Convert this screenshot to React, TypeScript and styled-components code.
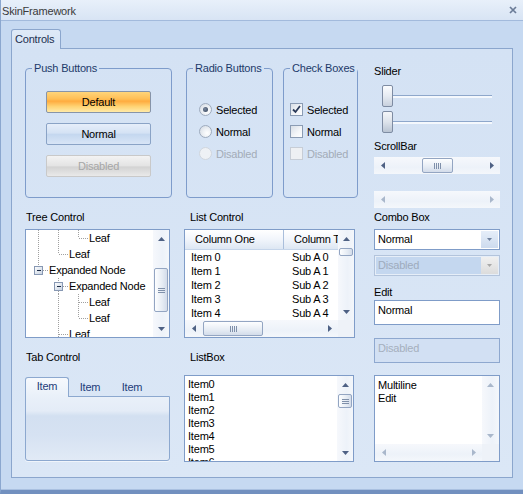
import React from "react";
import styled, { createGlobalStyle, css } from "styled-components";

const GlobalStyle = createGlobalStyle`
  html, body { margin: 0; padding: 0; background: #c6d9f1; }
  body {
    font-family: "Liberation Sans", Arial, sans-serif;
    font-size: 11px;
    letter-spacing: -0.2px;
    color: #000;
  }
  * { box-sizing: border-box; }
`;

/* ---------- window frame ---------- */
const Window = styled.div`
  width: 523px;
  height: 494px;
  display: flex;
  flex-direction: column;
  background: #c6d9f1;
  border-left: 1px solid #8ba7cf;
  border-bottom: 4px solid #7290bf;
  box-shadow: inset 0 -1px 0 #a9c0e0;
`;

const TitleBar = styled.div`
  flex: none;
  height: 21px;
  display: flex;
  align-items: center;
  justify-content: space-between;
  padding: 0 6px 0 1px;
  background: linear-gradient(#e8f0fa, #d8e4f4);
  border-bottom: 1px solid #a2badc;
`;

const TitleText = styled.span`
  color: #3a3a3a;
  line-height: 13px;
  padding-top: 3px;
`;

const Body = styled.div`
  flex: 1;
  display: flex;
  flex-direction: column;
  padding: 8px 10px 0 10px;
`;

const TabStrip = styled.div`
  display: flex;
  height: 19px;
`;

const MainTab = styled.div`
  position: relative;
  z-index: 1;
  width: 50px;
  height: 20px;
  margin-bottom: -1px;
  padding: 3px 0 0 3px;
  line-height: 13px;
  color: #1c3050;
  background: linear-gradient(#dfeaf7, #d4e2f4);
  border: 1px solid #8ba6cd;
  border-bottom: none;
  border-radius: 3px 3px 0 0;
`;

const Panel = styled.div`
  width: 502px;
  height: 430px;
  display: flex;
  align-items: flex-start;
  padding-left: 13px;
  border: 1px solid #8ba6cd;
  background: linear-gradient(#d4e2f4, #dbe7f6);
`;

const Column = styled.div<{ $width: number; $gap?: number }>`
  width: ${(p) => p.$width}px;
  margin-left: ${(p) => p.$gap ?? 0}px;
  display: flex;
  flex-direction: column;
  flex: none;
`;

/* ---------- labels ---------- */
const FieldLabel = styled.div<{ $top: number; $indent?: number }>`
  margin-top: ${(p) => p.$top}px;
  padding-left: ${(p) => p.$indent ?? 1}px;
  line-height: 13px;
  color: #000;
  white-space: nowrap;
`;

/* ---------- group boxes ---------- */
const GroupRow = styled.div`
  display: flex;
  gap: 10px;
  margin-top: 13px;
  padding-left: 2px;
`;

const GroupBox = styled.fieldset<{ $width: number; $top?: number }>`
  width: ${(p) => p.$width}px;
  height: 136px;
  margin: ${(p) => p.$top ?? 0}px 0 0 0;
  padding: 0;
  min-width: 0;
  border: 1px solid #7e9ccb;
  border-radius: 4px;
`;

const Legend = styled.legend`
  margin-left: 6px;
  padding: 0 2px;
  line-height: 13px;
  color: #1d3a6a;
  white-space: nowrap;
`;

const ButtonStack = styled.div`
  display: flex;
  flex-direction: column;
  align-items: center;
  gap: 10px;
  padding-top: 16px;
`;

const variants = {
  default: css`
    border-color: #8794a8;
    background: linear-gradient(#ffd57a 0%, #ffbe55 35%, #ffac3f 46%, #ffd373 72%, #ffeaa8 100%);
    color: #000;
  `,
  normal: css`
    border-color: #8aa3c6;
    background: linear-gradient(#e6eefa 0%, #d4e2f4 45%, #c4d7ef 52%, #d8e5f6 100%);
    color: #000;
  `,
  disabled: css`
    border-color: #c9c9c9;
    background: linear-gradient(#f3f3f3 0%, #e4e4e4 48%, #d3d3d3 55%, #e9e9e9 100%);
    color: #a6a6a6;
  `,
};

const PushButton = styled.div<{ $variant: keyof typeof variants }>`
  width: 105px;
  height: 22px;
  display: flex;
  align-items: center;
  justify-content: center;
  border: 1px solid;
  border-radius: 2px;
  ${(p) => variants[p.$variant]}
`;

const OptionList = styled.div<{ $padLeft: number }>`
  display: flex;
  flex-direction: column;
  gap: 9px;
  padding: 28px 0 0 ${(p) => p.$padLeft}px;
`;

const OptionRow = styled.div<{ $disabled?: boolean }>`
  display: flex;
  align-items: center;
  gap: 4px;
  height: 13px;
  white-space: nowrap;
  color: ${(p) => (p.$disabled ? "#a3acb8" : "#000")};
`;

const RadioMark = styled.span<{ $disabled?: boolean }>`
  width: 13px;
  height: 13px;
  flex: none;
  display: flex;
  align-items: center;
  justify-content: center;
  border-radius: 50%;
  border: 1px solid ${(p) => (p.$disabled ? "#d0d6de" : "#9eabbe")};
  background: ${(p) =>
    p.$disabled
      ? "#eef1f5"
      : "radial-gradient(circle at 65% 65%, #ffffff 0%, #eef1f5 40%, #cfd6e0 100%)"};
`;

const RadioDot = styled.span`
  width: 5px;
  height: 5px;
  border-radius: 50%;
  background: radial-gradient(circle at 40% 40%, #7b8aa1, #2f3e55);
`;

const CheckMark = styled.span<{ $disabled?: boolean }>`
  width: 13px;
  height: 13px;
  flex: none;
  display: flex;
  align-items: center;
  justify-content: center;
  border: 1px solid ${(p) => (p.$disabled ? "#c7cdd6" : "#8b9cb4")};
  background: ${(p) =>
    p.$disabled ? "#eef0f3" : "linear-gradient(135deg, #d9dfe7 0%, #f4f6f9 60%, #ffffff 100%)"};
`;

/* ---------- white boxes ---------- */
const WhiteBox = styled.div<{ $top: number; $width: number; $height: number }>`
  margin-top: ${(p) => p.$top}px;
  width: ${(p) => p.$width}px;
  height: ${(p) => p.$height}px;
  border: 1px solid #7f9cc8;
  background: #fff;
  overflow: hidden;
`;

const ScrollFrame = styled(WhiteBox)`
  display: grid;
  grid-template-columns: 1fr 16px;
`;

const ScrollFrame2D = styled(WhiteBox)<{ $vw?: number }>`
  display: grid;
  grid-template-columns: 1fr ${(p) => p.$vw ?? 16}px;
  grid-template-rows: 1fr 17px;
`;

/* ---------- scroll bars ---------- */
const VBar = styled.div`
  display: flex;
  flex-direction: column;
  min-height: 0;
  background: linear-gradient(90deg, #f6f8fc, #edf2f9 60%, #f4f7fb);
`;

const HBar = styled.div<{ $top?: number; $width?: number }>`
  display: flex;
  height: 17px;
  flex: none;
  margin-top: ${(p) => p.$top ?? 0}px;
  width: ${(p) => (p.$width ? `${p.$width}px` : "auto")};
  background: linear-gradient(#f6f8fc, #edf2f9 60%, #f4f7fb);
`;

const ArrowCell = styled.div<{ $v?: boolean }>`
  flex: none;
  width: ${(p) => (p.$v ? "100%" : "17px")};
  height: 17px;
  display: flex;
  align-items: center;
  justify-content: center;
`;

const Track = styled.div<{ $v?: boolean }>`
  flex: 1;
  min-height: 0;
  min-width: 0;
  display: flex;
  flex-direction: ${(p) => (p.$v ? "column" : "row")};
  align-items: center;
`;

const Thumb = styled.div<{ $v?: boolean; $offset: number; $len: number }>`
  flex: none;
  display: flex;
  align-items: center;
  justify-content: center;
  border: 1px solid #93a5c2;
  border-radius: 2px;
  ${(p) =>
    p.$v
      ? css`
          width: 14px;
          height: ${p.$len}px;
          margin-top: ${p.$offset}px;
          background: linear-gradient(90deg, #fdfeff, #e6ecf4 60%, #d3dcea);
        `
      : css`
          height: 15px;
          width: ${p.$len}px;
          margin-left: ${p.$offset}px;
          background: linear-gradient(#fdfeff, #e6ecf4 60%, #d3dcea);
        `}
`;

const Grip = styled.span<{ $v?: boolean }>`
  ${(p) =>
    p.$v
      ? css`
          width: 7px;
          height: 5px;
          background: repeating-linear-gradient(180deg, #7f90aa 0 1px, transparent 1px 2px);
        `
      : css`
          width: 7px;
          height: 6px;
          background: repeating-linear-gradient(90deg, #7f90aa 0 1px, transparent 1px 2px);
        `}
`;

const Corner = styled.div`
  background: #eef2f8;
`;

type Dir = "up" | "down" | "left" | "right";
const Arrow = ({ dir, disabled }: { dir: Dir; disabled?: boolean }) => {
  const fill = disabled ? "#a9b7cb" : "#4e6184";
  const pts: Record<Dir, string> = {
    up: "0,4 3.5,0 7,4",
    down: "0,0 7,0 3.5,4",
    left: "4,0 4,7 0,3.5",
    right: "0,0 4,3.5 0,7",
  };
  const vertical = dir === "up" || dir === "down";
  return (
    <svg width={vertical ? 7 : 4} height={vertical ? 4 : 7} viewBox={vertical ? "0 0 7 4" : "0 0 4 7"}>
      <polygon points={pts[dir]} fill={fill} />
    </svg>
  );
};

const VScroll = ({
  offset,
  len,
  disabled,
  noThumb,
}: {
  offset?: number;
  len?: number;
  disabled?: boolean;
  noThumb?: boolean;
}) => (
  <VBar>
    <ArrowCell $v>
      <Arrow dir="up" disabled={disabled} />
    </ArrowCell>
    <Track $v>
      {!noThumb && (
        <Thumb $v $offset={offset ?? 0} $len={len ?? 14}>
          {(len ?? 14) >= 12 && <Grip $v />}
        </Thumb>
      )}
    </Track>
    <ArrowCell $v>
      <Arrow dir="down" disabled={disabled} />
    </ArrowCell>
  </VBar>
);

const HScroll = ({
  offset,
  len,
  disabled,
  noThumb,
  top,
  width,
}: {
  offset?: number;
  len?: number;
  disabled?: boolean;
  noThumb?: boolean;
  top?: number;
  width?: number;
}) => (
  <HBar $top={top} $width={width}>
    <ArrowCell>
      <Arrow dir="left" disabled={disabled} />
    </ArrowCell>
    <Track>
      {!noThumb && (
        <Thumb $offset={offset ?? 0} $len={len ?? 30}>
          <Grip />
        </Thumb>
      )}
    </Track>
    <ArrowCell>
      <Arrow dir="right" disabled={disabled} />
    </ArrowCell>
  </HBar>
);

/* ---------- tree ---------- */
const TreeList = styled.div`
  padding: 0 0 0 2px;
  overflow: hidden;
`;

const TreeRow = styled.div`
  display: flex;
  align-items: center;
  height: 16px;
  white-space: nowrap;
`;

const TreeText = styled.span`
  margin-left: 1px;
  line-height: 16px;
`;

type ConnKind = "n" | "v" | "L" | "T" | "boxL" | "boxT";

const DOT = { stroke: "#a0a0a0", strokeDasharray: "1 1", shapeRendering: "crispEdges" as const };

const Connector = ({ kind }: { kind: ConnKind }) => {
  const box = kind === "boxL" || kind === "boxT";
  return (
    <svg width={20} height={16} viewBox="0 0 20 16" style={{ flex: "none" }}>
      <defs>
        <linearGradient id="tbox" x1="0" y1="0" x2="1" y2="1">
          <stop offset="0" stopColor="#ffffff" />
          <stop offset="1" stopColor="#c6d1e0" />
        </linearGradient>
      </defs>
      {kind === "v" && <line x1={10.5} y1={0} x2={10.5} y2={16} {...DOT} />}
      {kind === "L" && (
        <>
          <line x1={10.5} y1={0} x2={10.5} y2={8} {...DOT} />
          <line x1={11} y1={8.5} x2={20} y2={8.5} {...DOT} />
        </>
      )}
      {kind === "T" && (
        <>
          <line x1={10.5} y1={0} x2={10.5} y2={16} {...DOT} />
          <line x1={11} y1={8.5} x2={20} y2={8.5} {...DOT} />
        </>
      )}
      {box && (
        <>
          <line x1={10.5} y1={0} x2={10.5} y2={4} {...DOT} />
          {kind === "boxT" && <line x1={10.5} y1={13} x2={10.5} y2={16} {...DOT} />}
          <line x1={15} y1={8.5} x2={20} y2={8.5} {...DOT} />
          <rect x={6.5} y={4.5} width={8} height={8} fill="url(#tbox)" stroke="#8798b3" shapeRendering="crispEdges" />
          <line x1={8.5} y1={8.5} x2={13} y2={8.5} stroke="#1b2a44" shapeRendering="crispEdges" />
        </>
      )}
    </svg>
  );
};

const treeRows: { cells: ConnKind[]; text: string }[] = [
  { cells: ["v", "v", "L"], text: "Leaf" },
  { cells: ["v", "L"], text: "Leaf" },
  { cells: ["boxL"], text: "Expanded Node" },
  { cells: ["n", "boxT"], text: "Expanded Node" },
  { cells: ["n", "v", "T"], text: "Leaf" },
  { cells: ["n", "v", "L"], text: "Leaf" },
  { cells: ["n", "T"], text: "Leaf" },
];

/* ---------- list control ---------- */
const ListArea = styled.div`
  display: flex;
  flex-direction: column;
  overflow: hidden;
  min-width: 0;
`;

const ListHeader = styled.div`
  display: grid;
  grid-template-columns: 99px 1fr;
  height: 20px;
  flex: none;
  background: linear-gradient(#ffffff, #f1f5fb 50%, #dde7f3);
  border-bottom: 1px solid #c5d5ea;
`;

const HeaderCell = styled.div<{ $divider?: boolean }>`
  padding-left: 10px;
  line-height: 19px;
  white-space: nowrap;
  overflow: hidden;
  border-right: ${(p) => (p.$divider ? "1px solid #a9bedb" : "none")};
`;

const ListRow = styled.div`
  display: grid;
  grid-template-columns: 99px 1fr;
  height: 14px;
  line-height: 14px;
  flex: none;
  white-space: nowrap;
`;

const ListCell = styled.span<{ $pad: number }>`
  padding-left: ${(p) => p.$pad}px;
  overflow: hidden;
`;

/* ---------- tab control ---------- */
const TabCtrl = styled.div`
  margin-top: 13px;
  width: 145px;
  display: flex;
  flex-direction: column;
`;

const TabHeader = styled.div`
  display: flex;
  height: 19px;
`;

const TabItem = styled.div<{ $active?: boolean }>`
  width: ${(p) => (p.$active ? 44 : 42)}px;
  text-align: center;
  line-height: 13px;
  color: #1f3d7a;
  ${(p) =>
    p.$active
      ? css`
          position: relative;
          z-index: 1;
          height: 20px;
          margin-bottom: -1px;
          padding-top: 2px;
          border: 1px solid #8ca8cf;
          border-bottom: none;
          border-radius: 3px 3px 0 0;
          background: linear-gradient(#f6f9fd, #e9f0f9);
        `
      : css`
          padding-top: 4px;
        `}
`;

const TabBody = styled.div`
  height: 65px;
  border: 1px solid #8ca8cf;
  border-radius: 0 0 3px 3px;
  background: linear-gradient(
    #e9f0f9 0%,
    #e4ecf7 22%,
    #d3e0f1 30%,
    #d6e2f2 60%,
    #e1eaf6 100%
  );
  box-shadow: 0 1px 0 #f0f5fb;
`;

/* ---------- list box ---------- */
const ListBoxItems = styled.div`
  padding: 2px 0 0 3px;
  overflow: hidden;
`;

const ListBoxItem = styled.div`
  height: 13px;
  line-height: 13px;
`;

/* ---------- slider ---------- */
const SliderRow = styled.div<{ $top: number }>`
  margin-top: ${(p) => p.$top}px;
  height: 22px;
  display: flex;
  align-items: center;
  padding-left: 8px;
`;

const SliderThumb = styled.div<{ $pressed?: boolean }>`
  width: 11px;
  height: 22px;
  flex: none;
  border: 1px solid #7e8ca3;
  border-radius: 2px;
  background: ${(p) =>
    p.$pressed
      ? "linear-gradient(#f4f6f9, #dde3eb 50%, #b9c4d3)"
      : "linear-gradient(#fbfcfe, #e6ebf2 50%, #c8d1de)"};
`;

const SliderTrack = styled.div`
  width: 99px;
  height: 3px;
  border-top: 1px solid #8ea7cb;
  border-bottom: 2px solid #f4f8fd;
`;

/* ---------- combo / edit ---------- */
const Combo = styled.div<{ $top: number; $disabled?: boolean }>`
  margin-top: ${(p) => p.$top}px;
  width: 126px;
  height: 21px;
  display: flex;
  border: 1px solid ${(p) => (p.$disabled ? "#b3c4dc" : "#7f9cc8")};
  background: ${(p) => (p.$disabled ? "#c4d7ef" : "#fff")};
  box-shadow: ${(p) => (p.$disabled ? "inset 0 0 0 1px #e6eef8" : "none")};
  color: ${(p) => (p.$disabled ? "#9eabbd" : "#000")};
`;

const ComboText = styled.div`
  flex: 1;
  padding-left: 3px;
  line-height: 18px;
`;

const ComboButton = styled.div<{ $disabled?: boolean }>`
  width: 17px;
  margin: 1px;
  display: flex;
  align-items: center;
  justify-content: center;
  background: ${(p) =>
    p.$disabled ? "linear-gradient(#f0f0f0, #dcdcdc)" : "linear-gradient(#e6eef9, #cddbee)"};
`;

const EditBox = styled.div<{ $top: number; $disabled?: boolean }>`
  margin-top: ${(p) => p.$top}px;
  width: 126px;
  height: 25px;
  padding: 3px 0 0 3px;
  line-height: 13px;
  border: 1px solid ${(p) => (p.$disabled ? "#8ea8cf" : "#7f9cc8")};
  background: ${(p) => (p.$disabled ? "#d2e0f3" : "#fff")};
  color: ${(p) => (p.$disabled ? "#a5afbd" : "#000")};
`;

const MultiText = styled.div`
  padding: 3px 0 0 3px;
  line-height: 13px;
`;

const SmallDown = ({ color }: { color: string }) => (
  <svg width={5} height={3} viewBox="0 0 5 3">
    <polygon points="0,0 5,0 2.5,3" fill={color} />
  </svg>
);

const CheckGlyph = () => (
  <svg width={9} height={9} viewBox="0 0 9 9">
    <path d="M1 4.5 L3.5 7 L8 1" fill="none" stroke="#2b3b5a" strokeWidth={1.8} />
  </svg>
);

export default function App() {
  return (
    <>
      <GlobalStyle />
      <Window>
        <TitleBar>
          <TitleText>SkinFramework</TitleText>
          <svg width={8} height={8} viewBox="0 0 8 8">
            <path d="M1 1 L7 7 M7 1 L1 7" stroke="#6b7c97" strokeWidth={1.7} />
          </svg>
        </TitleBar>
        <Body>
          <TabStrip>
            <MainTab>Controls</MainTab>
          </TabStrip>
          <Panel>
            {/* left column */}
            <Column $width={147}>
              <GroupBox $width={147} $top={13}>
                <Legend>Push Buttons</Legend>
                <ButtonStack>
                  <PushButton $variant="default">Default</PushButton>
                  <PushButton $variant="normal">Normal</PushButton>
                  <PushButton $variant="disabled">Disabled</PushButton>
                </ButtonStack>
              </GroupBox>

              <FieldLabel $top={13}>Tree Control</FieldLabel>
              <ScrollFrame $top={5} $width={145} $height={109}>
                <TreeList>
                  {treeRows.map((r, i) => (
                    <TreeRow key={i}>
                      {r.cells.map((c, j) => (
                        <Connector key={j} kind={c} />
                      ))}
                      <TreeText>{r.text}</TreeText>
                    </TreeRow>
                  ))}
                </TreeList>
                <VScroll offset={21} len={44} />
              </ScrollFrame>

              <FieldLabel $top={13}>Tab Control</FieldLabel>
              <TabCtrl>
                <TabHeader>
                  <TabItem $active>Item</TabItem>
                  <TabItem>Item</TabItem>
                  <TabItem>Item</TabItem>
                </TabHeader>
                <TabBody />
              </TabCtrl>
            </Column>

            {/* middle column */}
            <Column $width={174} $gap={12}>
              <GroupRow>
                <GroupBox $width={87}>
                  <Legend>Radio Buttons</Legend>
                  <OptionList $padLeft={12}>
                    <OptionRow>
                      <RadioMark>
                        <RadioDot />
                      </RadioMark>
                      Selected
                    </OptionRow>
                    <OptionRow>
                      <RadioMark />
                      Normal
                    </OptionRow>
                    <OptionRow $disabled>
                      <RadioMark $disabled />
                      Disabled
                    </OptionRow>
                  </OptionList>
                </GroupBox>
                <GroupBox $width={75}>
                  <Legend>Check Boxes</Legend>
                  <OptionList $padLeft={6}>
                    <OptionRow>
                      <CheckMark>
                        <CheckGlyph />
                      </CheckMark>
                      Selected
                    </OptionRow>
                    <OptionRow>
                      <CheckMark />
                      Normal
                    </OptionRow>
                    <OptionRow $disabled>
                      <CheckMark $disabled />
                      Disabled
                    </OptionRow>
                  </OptionList>
                </GroupBox>
              </GroupRow>

              <FieldLabel $top={13} $indent={6}>
                List Control
              </FieldLabel>
              <ScrollFrame2D $top={5} $width={171} $height={109}>
                <ListArea>
                  <ListHeader>
                    <HeaderCell $divider>Column One</HeaderCell>
                    <HeaderCell>Column Two</HeaderCell>
                  </ListHeader>
                  {[0, 1, 2, 3, 4, 5].map((n) => (
                    <ListRow key={n}>
                      <ListCell $pad={6}>Item {n}</ListCell>
                      <ListCell $pad={8}>Sub A {n}</ListCell>
                    </ListRow>
                  ))}
                </ListArea>
                <VScroll offset={1} len={8} />
                <HScroll offset={1} len={60} />
                <Corner />
              </ScrollFrame2D>

              <FieldLabel $top={13} $indent={6}>
                ListBox
              </FieldLabel>
              <ScrollFrame $top={11} $width={170} $height={87}>
                <ListBoxItems>
                  {[0, 1, 2, 3, 4, 5, 6].map((n) => (
                    <ListBoxItem key={n}>Item{n}</ListBoxItem>
                  ))}
                </ListBoxItems>
                <VScroll offset={1} len={14} />
              </ScrollFrame>
            </Column>

            {/* right column */}
            <Column $width={126} $gap={16}>
              <FieldLabel $top={16} $indent={0}>
                Slider
              </FieldLabel>
              <SliderRow $top={7}>
                <SliderThumb />
                <SliderTrack />
              </SliderRow>
              <SliderRow $top={4}>
                <SliderThumb $pressed />
                <SliderTrack />
              </SliderRow>

              <FieldLabel $top={7} $indent={0}>
                ScrollBar
              </FieldLabel>
              <HScroll top={4} width={126} offset={31} len={31} />
              <HScroll top={17} width={126} disabled noThumb />

              <FieldLabel $top={3} $indent={0}>
                Combo Box
              </FieldLabel>
              <Combo $top={5}>
                <ComboText>Normal</ComboText>
                <ComboButton>
                  <SmallDown color="#6f819e" />
                </ComboButton>
              </Combo>
              <Combo $top={5} $disabled>
                <ComboText>Disabled</ComboText>
                <ComboButton $disabled>
                  <SmallDown color="#a8a8a8" />
                </ComboButton>
              </Combo>

              <FieldLabel $top={10} $indent={0}>
                Edit
              </FieldLabel>
              <EditBox $top={1}>Normal</EditBox>
              <EditBox $top={13} $disabled>
                Disabled
              </EditBox>

              <ScrollFrame2D $top={12} $width={126} $height={87} $vw={17}>
                <MultiText>
                  Multiline
                  <br />
                  Edit
                </MultiText>
                <VScroll disabled noThumb />
                <HScroll disabled noThumb />
                <Corner />
              </ScrollFrame2D>
            </Column>
          </Panel>
        </Body>
      </Window>
    </>
  );
}
